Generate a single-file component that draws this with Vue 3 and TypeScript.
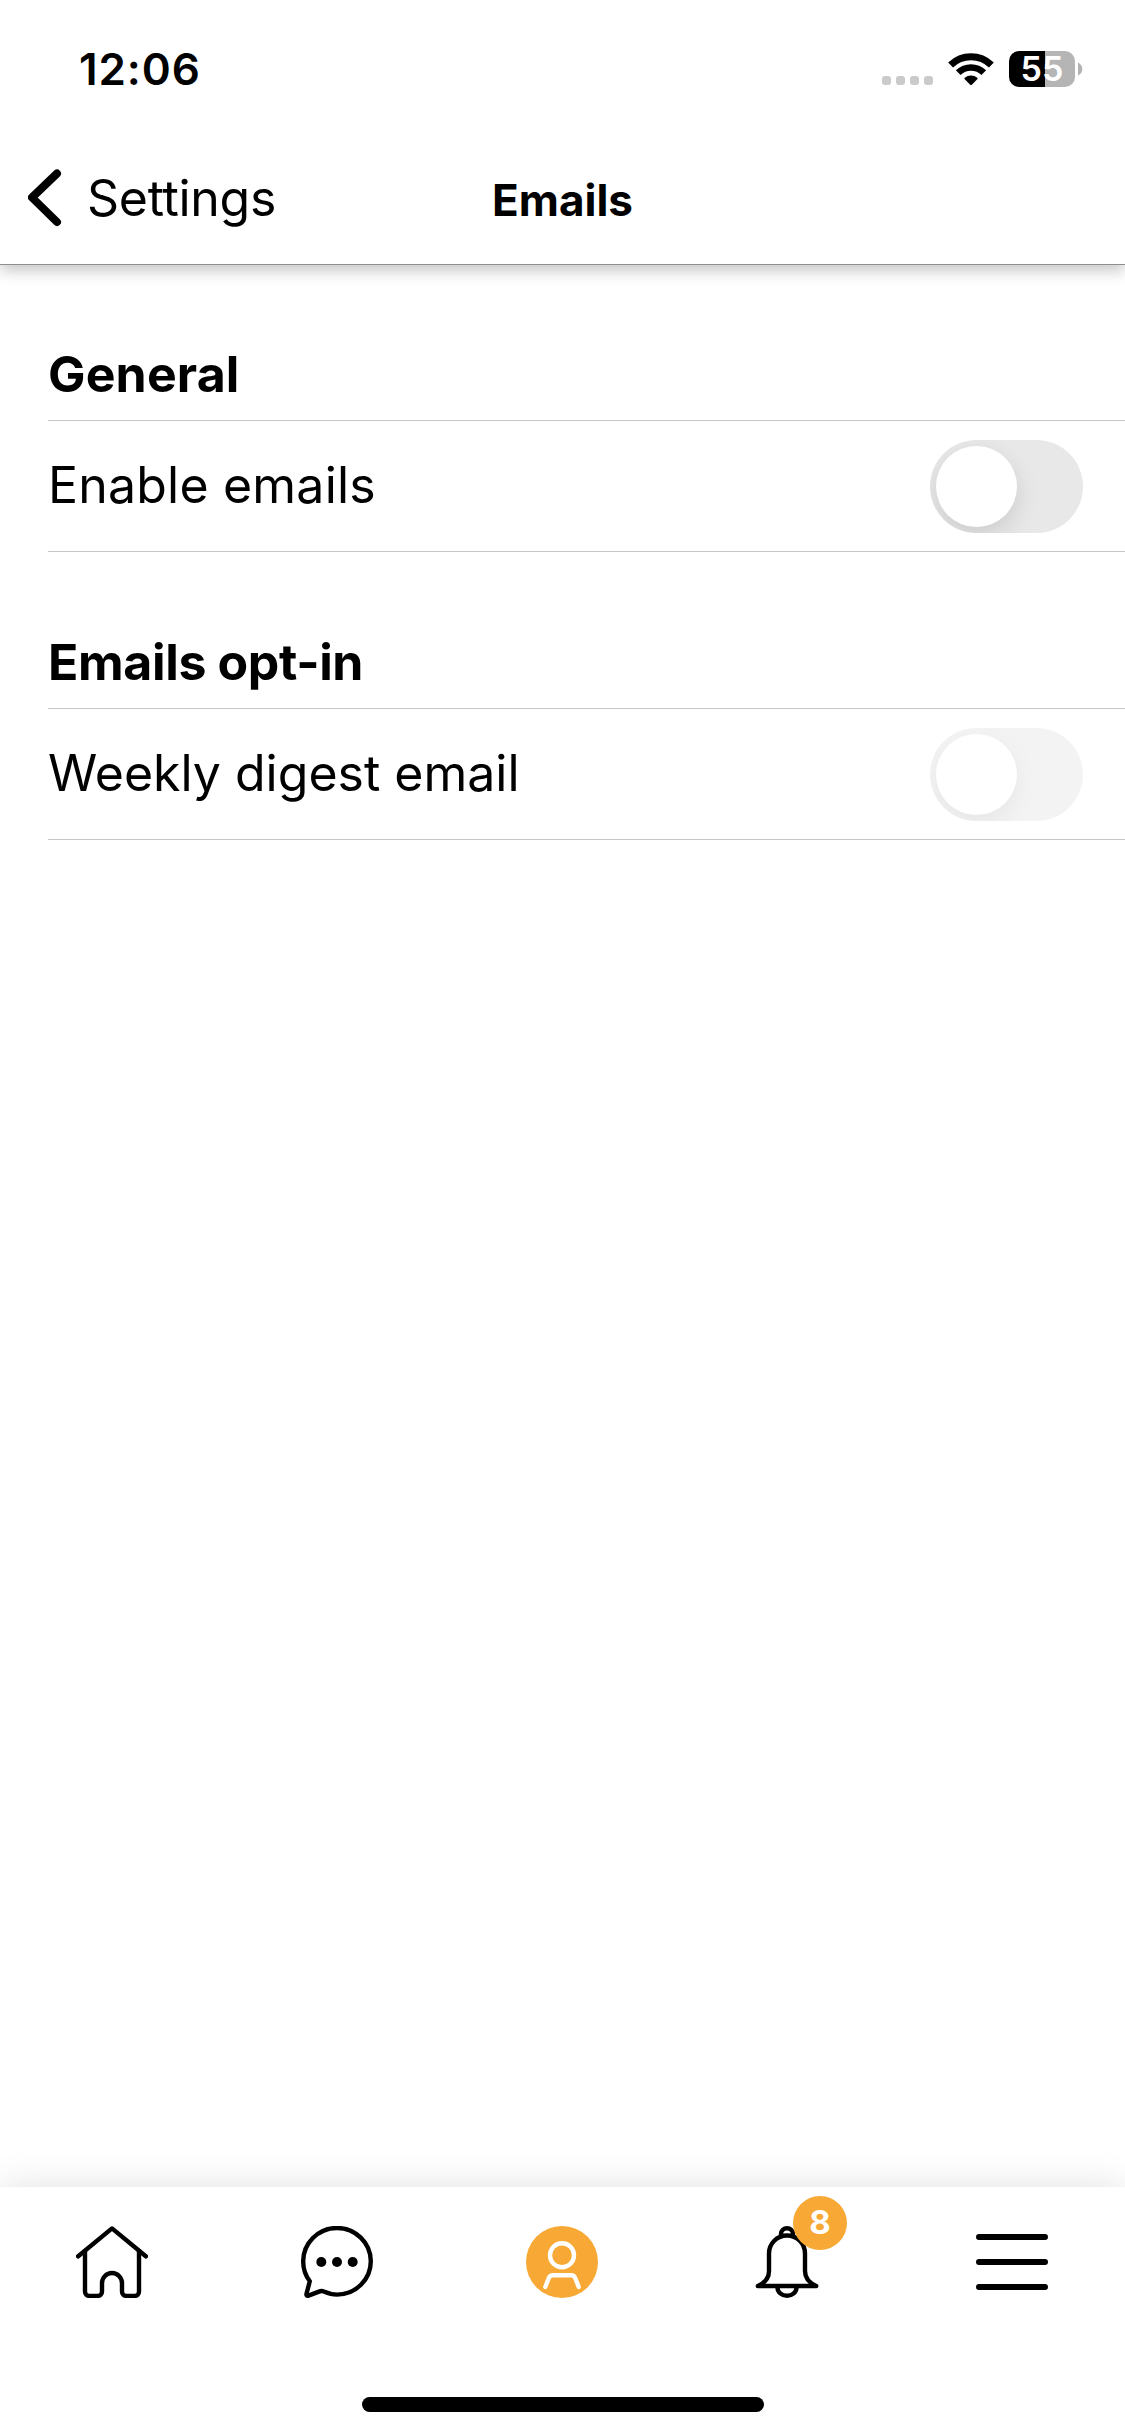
<script setup lang="ts">
interface Option {
  label: string
  enabled: boolean
  disabled?: boolean
  spacing: string
}
interface Section {
  title: string
  key: string
  options: Option[]
}

const sections: Section[] = [
  { title: 'General', key: 'general', options: [{ label: 'Enable emails', enabled: false, spacing: 'wide' }] },
  { title: 'Emails opt-in', key: 'opt-in', options: [{ label: 'Weekly digest email', enabled: false, disabled: true, spacing: 'normal' }] },
]
const unread = 8
</script>

<template>
  <div class="screen">
    <div class="status">
      <span class="time">12:06</span>
      <div class="indicators">
        <div class="signal"><i v-for="n in 4" :key="n" /></div>
        <svg class="wifi" width="46" height="34" viewBox="0 0 46 34">
          <g fill="none" stroke="#000">
            <path d="M2.600 12.900A29.300 29.300 0 0 1 43.400 12.900" stroke-width="7" />
            <path d="M10.200 20.700A18.200 18.200 0 0 1 35.800 20.700" stroke-width="6.600" />
          </g>
          <path d="M16.500 27.100Q16 26.400 16.700 25.700A10.600 10.600 0 0 1 29.300 25.700Q30 26.400 29.500 27.100L23.800 32.800Q23 33.400 22.200 32.800Z" />
        </svg>
        <div class="battery"><span>55</span></div>
        <svg class="nub" width="5" height="14" viewBox="0 0 5 14"><path d="M0 .5Q4.300 2.500 4.300 7T0 13.500Z" fill="#b3b3b3" /></svg>
      </div>
    </div>

    <header class="nav">
      <button class="back">
        <svg width="34" height="58" viewBox="0 0 34 58" fill="none" stroke="#000" stroke-width="8" stroke-linecap="round" stroke-linejoin="round">
          <path d="M29 4.500L4 28.500L29 53" />
        </svg>
        <span>Settings</span>
      </button>
      <h1>Emails</h1>
    </header>

    <main>
      <section v-for="s in sections" :key="s.key">
        <h2 :class="s.key">{{ s.title }}</h2>
        <div v-for="o in s.options" :key="o.label" class="row">
          <span :class="o.spacing">{{ o.label }}</span>
          <div class="toggle" :class="{ on: o.enabled, disabled: o.disabled }"><i /></div>
        </div>
      </section>
    </main>

    <footer>
      <nav class="tabs">
        <a>
          <svg viewBox="0 0 72 72" class="line">
            <path d="M2.200 30.300L36 2.400L69.800 30.300" />
            <path d="M9 25V65.700a4.200 4.200 0 0 0 4.200 4.200H21.800a4.200 4.200 0 0 0 4.200-4.200V57a10 10 0 0 1 20 0V65.700a4.200 4.200 0 0 0 4.200 4.200H58.800a4.200 4.200 0 0 0 4.200-4.200V25" />
          </svg>
        </a>
        <a>
          <svg viewBox="0 0 72 72" class="line">
            <path d="M8.800 55.200C4.500 49.500 2.200 43 2.200 35.700A33.800 33.300 0 1 1 36 68.600C31 68.600 26.800 67.200 22.800 65.500Q20.500 64.600 18 65.600L7.500 69.600Q5 70.300 5.500 67.700Z" />
            <g fill="#000" stroke="none"><circle cx="20.300" cy="36" r="5" /><circle cx="36" cy="36" r="5" /><circle cx="51.700" cy="36" r="5" /></g>
          </svg>
        </a>
        <a>
          <svg viewBox="0 0 72 72">
            <circle cx="36" cy="36" r="36" fill="#f8a834" />
            <g fill="none" stroke="#fff" stroke-width="4.400" stroke-linecap="round" stroke-linejoin="round">
              <circle cx="36" cy="29.300" r="12" />
              <path d="M19.300 61L22.900 51.800Q24 49.200 26.800 49.200H45.200Q48 49.200 49.100 51.800L52.700 61" />
            </g>
          </svg>
        </a>
        <a>
          <svg viewBox="0 0 72 72" class="line">
            <path d="M30 9.800V8a6 5.800 0 0 1 12 0V9.800" />
            <path d="M6.800 60C13.500 57 18 51.500 18 45V27.500a18 18 0 0 1 36 0V45C54 51.500 58.500 57 65.200 60Z" />
            <path d="M26.500 61.500a9.500 8.300 0 0 0 19 0" />
          </svg>
          <b class="badge">{{ unread }}</b>
        </a>
        <a>
          <svg viewBox="0 0 72 72" stroke="#000" stroke-width="6" stroke-linecap="round">
            <path d="M3 11H69M3 36H69M3 61H69" />
          </svg>
        </a>
      </nav>
      <div class="home" />
    </footer>
  </div>
</template>

<style>
body { margin: 0; background: #fff; }
</style>

<style scoped>
* { box-sizing: border-box; }
.screen {
  width: 1125px; height: 2436px; background: #fff; color: #000; overflow: hidden;
  font-family: Inter, "Liberation Sans", sans-serif;
  display: flex; flex-direction: column;
}
.status {
  position: relative; z-index: 2; height: 132px; background: #fff;
  display: flex; justify-content: space-between; padding: 0 42px 0 79px;
}
.time { font-size: 44px; font-weight: 600; letter-spacing: .9px; line-height: 60px; margin-top: 39px; }
.indicators { display: flex; align-items: flex-start; }
.signal { display: flex; gap: 5px; margin: 76px 15px 0 0; }
.signal i { width: 9px; height: 9px; border-radius: 3px; background: #cacaca; }
.wifi { margin: 52px 15px 0 0; }
.battery {
  width: 66px; height: 36px; margin-top: 51px; border-radius: 10px; color: #fff;
  background: linear-gradient(90deg, #000 36px, #b5b5b5 36px);
  font-size: 34px; font-weight: 600; line-height: 36px; text-align: center;
}
.nub { margin: 62px 0 0 3px; }

.nav {
  position: relative; z-index: 1; height: 133px; flex: none; background: #fff;
  display: grid; grid-template-columns: 1fr auto 1fr; align-items: start;
  border-bottom: 1px solid #8e8e8e; box-shadow: 0 6px 14px rgba(0, 0, 0, .22);
}
.back { display: flex; gap: 25px; padding: 37px 0 0 28px; border: 0; background: none; font: inherit; color: inherit; text-align: left; }
.back span { font-size: 50px; line-height: 60px; letter-spacing: -.3px; margin-top: -1px; }
h1 { margin: 38px 0 0; font-size: 44px; font-weight: 700; line-height: 60px; }

main { flex: 1; padding: 0 0 0 48px; }
section { display: flex; flex-direction: column; }
h2 {
  margin: 0; height: 156px; padding-top: 79px; font-size: 50px; font-weight: 700; line-height: 60px;
  letter-spacing: .15px; border-bottom: 1px solid #c6c6c6;
}
section + section h2 { height: 157px; padding-top: 80px; }
h2.opt-in { letter-spacing: -.35px; }
.row { height: 131px; display: flex; align-items: flex-start; justify-content: space-between; padding-right: 42px; border-bottom: 1px solid #c6c6c6; }
.row span { font-size: 50px; font-weight: 385; line-height: 60px; margin-top: 34px; }
.row .wide { letter-spacing: .2px; }
.row .normal { letter-spacing: 0; }
.toggle { width: 153px; height: 93px; margin-top: 19px; padding: 6px; border-radius: 47px; background: #e8e8e8; overflow: hidden; }
.toggle i { display: block; width: 81px; height: 81px; border-radius: 50%; background: #fff; box-shadow: 0 9px 24px rgba(0, 0, 0, .12); }
.toggle.on i { margin-left: auto; }
.toggle.disabled { opacity: .48; }

footer { position: relative; height: 249px; background: #fff; box-shadow: 0 0 36px rgba(0, 0, 0, .12); display: flex; flex-direction: column; align-items: center; }
.tabs { width: 100%; height: 210px; display: grid; grid-template-columns: repeat(5, 1fr); }
.tabs a { position: relative; display: flex; justify-content: center; align-items: flex-start; padding: 39px 1px 0 0; }
.tabs svg { width: 72px; height: 72px; }
.line { fill: none; stroke: #000; stroke-width: 4.400; stroke-linecap: round; stroke-linejoin: round; }
.badge {
  position: absolute; left: 118px; top: 9px; width: 54px; height: 54px; border-radius: 50%;
  background: #f8a834; color: #fff; font-size: 33px; font-weight: 700; line-height: 53px; text-align: center;
}
.home { width: 402px; height: 15px; border-radius: 8px; background: #000; }
</style>
